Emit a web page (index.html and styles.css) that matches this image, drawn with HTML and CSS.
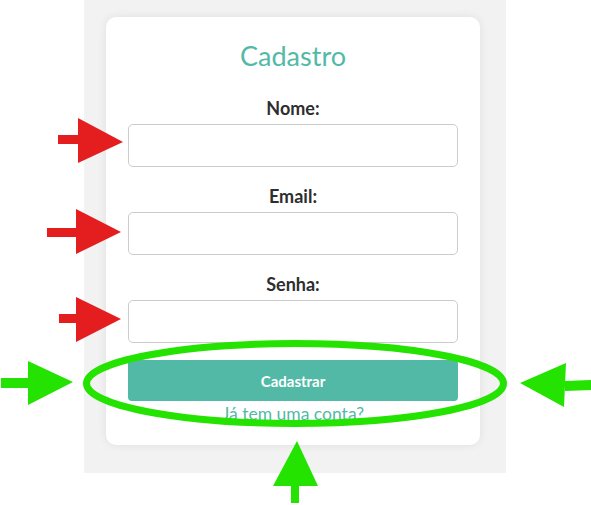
FILE: index.html
```html
<!DOCTYPE html>
<html lang="pt-BR">
<head>
<meta charset="utf-8">
<title>Cadastro</title>
<link rel="stylesheet" href="styles.css">
</head>
<body>
<main class="stage">
  <form class="card">
    <h1 class="title">Cadastro</h1>
    <div class="field">
      <label class="label" for="nome">Nome:</label>
      <input class="input" id="nome" type="text">
    </div>
    <div class="field">
      <label class="label" for="email">Email:</label>
      <input class="input" id="email" type="email">
    </div>
    <div class="field">
      <label class="label" for="senha">Senha:</label>
      <input class="input" id="senha" type="password">
    </div>
    <button class="button" type="button">Cadastrar</button>
    <a class="link" href="#">Já tem uma conta?</a>
  </form>
</main>
<svg class="annotations" width="591" height="505" viewBox="0 0 591 505" aria-hidden="true">
  <g fill="#e41d1f">
    <rect x="58" y="135" width="21" height="9"/>
    <polygon points="78,118 123,142 78,163"/>
    <rect x="47" y="228" width="30" height="9"/>
    <polygon points="76,209 121,232 76,254"/>
    <rect x="59" y="314" width="18" height="9"/>
    <polygon points="76,297 121,319 76,342"/>
  </g>
  <g fill="#24e300">
    <rect x="1" y="378" width="28" height="10"/>
    <polygon points="28,361 73,382 28,405"/>
    <polygon points="565,381 591,380 591,390 565,391"/>
    <polygon points="566,363 520,383 564,407"/>
    <rect x="291" y="485" width="8" height="18"/>
    <polygon points="297,441 273,486 318,486"/>
  </g>
  <ellipse cx="295" cy="383.5" rx="208.5" ry="40" fill="none" stroke="#24e300" stroke-width="7"/>
</svg>
</body>
</html>
```

FILE: styles.css
```css
html, body {
  margin: 0;
  padding: 0;
  background: #ffffff;
}

body {
  position: relative;
  width: 591px;
  height: 505px;
  overflow: hidden;
  font-family: "Lato", "Open Sans", sans-serif;
  color: #333333;
}

.stage {
  width: 422px;
  margin: 0 0 0 84px;
  background: #f2f2f2;
  padding: 17px 26px 28px 22px;
  box-sizing: border-box;
}

.card {
  background: #ffffff;
  border-radius: 10px;
  box-shadow: 0 0 10px rgba(0, 0, 0, 0.08);
  padding: 23px 22px 21px;
  display: flex;
  flex-direction: column;
  align-items: stretch;
}

.title {
  margin: 0 0 26px;
  font-size: 27px;
  line-height: 32px;
  font-weight: 400;
  color: #53b9a7;
  text-align: center;
}

.field {
  display: flex;
  flex-direction: column;
  margin-bottom: 19px;
}

.field:last-of-type {
  margin-bottom: 17px;
}

.label {
  font-size: 18px;
  line-height: 20px;
  font-weight: 700;
  color: #2e2e2e;
  text-align: center;
  margin-bottom: 6px;
}

.input {
  height: 43px;
  box-sizing: border-box;
  border: 1px solid #cccccc;
  border-radius: 5px;
  background: #ffffff;
  margin: 0;
  padding: 0 10px;
  font: inherit;
}

.button {
  height: 41px;
  border: 0;
  border-radius: 4px;
  background: #53b9a7;
  color: #ffffff;
  font-family: inherit;
  font-size: 15px;
  font-weight: 700;
  margin: 0;
}

.link {
  display: block;
  margin-top: 3px;
  text-align: center;
  font-size: 17.5px;
  line-height: 20px;
  color: #53b9a7;
  text-decoration: none;
}

.annotations {
  position: absolute;
  left: 0;
  top: 0;
  pointer-events: none;
}
```
